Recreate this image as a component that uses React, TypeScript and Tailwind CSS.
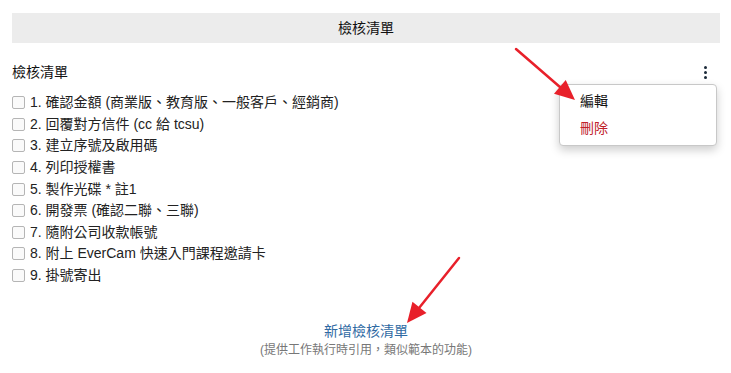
import { useState } from "react";

const items = [
  "1. 確認金額 (商業版、教育版、一般客戶、經銷商)",
  "2. 回覆對方信件 (cc 給 tcsu)",
  "3. 建立序號及啟用碼",
  "4. 列印授權書",
  "5. 製作光碟 * 註1",
  "6. 開發票 (確認二聯、三聯)",
  "7. 隨附公司收款帳號",
  "8. 附上 EverCam 快速入門課程邀請卡",
  "9. 掛號寄出",
];

function Arrow({ x1, y1, x2, y2 }: { x1: number; y1: number; x2: number; y2: number }) {
  const dx = x2 - x1;
  const dy = y2 - y1;
  const len = Math.hypot(dx, dy);
  const ux = dx / len;
  const uy = dy / len;
  const head = 20;
  const half = 9;
  const bx = x2 - ux * head;
  const by = y2 - uy * head;
  const p1 = `${bx - uy * half},${by + ux * half}`;
  const p2 = `${bx + uy * half},${by - ux * half}`;
  return (
    <g>
      <line x1={x1} y1={y1} x2={bx + ux * 2} y2={by + uy * 2} stroke="#e8202a" strokeWidth={2.5} strokeLinecap="round" />
      <polygon points={`${x2},${y2} ${p1} ${p2}`} fill="#e8202a" />
    </g>
  );
}

export default function App() {
  const [checked, setChecked] = useState<boolean[]>(items.map(() => false));

  return (
    <div className="relative h-[373px] w-[731px] bg-white px-3 pt-[13px] text-[14px] text-[#222] [font-family:'Liberation_Sans','Noto_Sans_CJK_TC',sans-serif]">
      <div className="flex h-[30px] w-[708px] items-center justify-center bg-[#ececec] text-[#111]">檢核清單</div>

      <div className="relative mt-[18px] flex h-[22px] w-[708px] items-center justify-between">
        <span className="text-[#111]">檢核清單</span>
        <button className="mr-[13px] flex flex-col items-center gap-[2px]" aria-label="more">
          <span className="h-[3px] w-[3px] rounded-full bg-[#1b2a3a]" />
          <span className="h-[3px] w-[3px] rounded-full bg-[#1b2a3a]" />
          <span className="h-[3px] w-[3px] rounded-full bg-[#1b2a3a]" />
        </button>
        <div className="absolute left-[547px] top-[23px] z-10 flex h-[62px] w-[158px] flex-col justify-center gap-[8px] rounded-[4px] border border-[#c8c8c8] bg-white pl-[20px] shadow-[0_4px_10px_rgba(0,0,0,0.2)]">
          <span className="leading-[19px] text-[#111]">編輯</span>
          <span className="leading-[19px] text-[#c0202a]">刪除</span>
        </div>
      </div>

      <ul className="mt-[9px] flex flex-col">
        {items.map((text, i) => (
          <li key={i} className="flex h-[21.6px] items-center gap-[5px]">
            <button
              onClick={() => setChecked((c) => c.map((v, j) => (j === i ? !v : v)))}
              className="h-[13px] w-[13px] shrink-0 rounded-[2px] border border-[#b5b5b5] bg-[#fafafa]"
              aria-checked={checked[i]}
              role="checkbox"
            />
            <span className="text-[#222]">{text}</span>
          </li>
        ))}
      </ul>

      <div className="mt-[35px] flex w-[708px] flex-col items-center">
        <a className="leading-[20px] text-[#2f6aa3]">新增檢核清單</a>
        <span className="text-[12px] leading-[18px] text-[#777]">(提供工作執行時引用，類似範本的功能)</span>
      </div>

      <svg className="pointer-events-none absolute left-0 top-0 z-20" width={731} height={373}>
        <Arrow x1={516} y1={49} x2={575} y2={100} />
        <Arrow x1={459} y1={258} x2={407} y2={323} />
      </svg>
    </div>
  );
}
